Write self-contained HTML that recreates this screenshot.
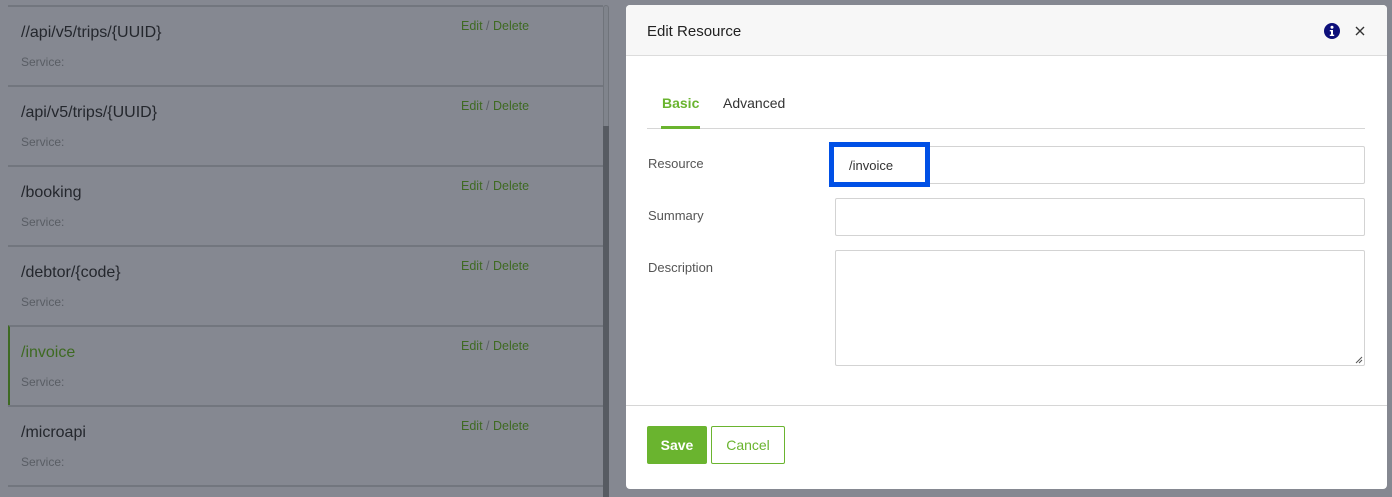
<!DOCTYPE html>
<html style="width:1392px;height:497px;overflow:hidden"><head><meta charset="utf-8"><style>
*{box-sizing:border-box;margin:0;padding:0}
body{width:1392px;height:497px;overflow:hidden;background:#858891;font-family:"Liberation Sans",sans-serif;position:relative}
.row{position:absolute;left:8px;width:595px;height:80px;border-top:2px solid #72767e}
.row .t{position:absolute;left:13px;top:17px;font-size:16px;color:#24272d}
.row .s{position:absolute;left:13px;top:48px;font-size:12px;color:#595d64}
.row .e{position:absolute;left:453px;top:12px;font-size:12.5px;color:#3e6a22}
.row .e span{color:#5a5e64}
.act{border-left:2px solid #3e6a22}
.act .t{color:#3e6a22;left:11px}
.act .s{left:11px}
.act .e{left:451px}
.track{position:absolute;left:603px;top:5px;width:6px;height:492px;border:1px solid #70747b;border-radius:3px;background:#80848c}
.thumb{position:absolute;left:603px;top:126px;width:6px;height:371px;background:#575b62}
.modal{position:absolute;left:626px;top:5px;width:761px;height:484px;background:#fff;border-radius:4px;overflow:hidden}
.hdr{height:51px;background:#f7f7f7;border-bottom:1px solid #dcdcdc;position:relative}
.hdr .ti{position:absolute;left:21px;top:18px;font-size:15px;color:#222}
.lab{position:absolute;left:22px;font-size:13px;color:#555}
.inp{position:absolute;left:209px;width:530px;border:1px solid #d3d3d3;border-radius:2px}
</style></head><body>
<div class="row" style="top:5px"><div class="t">//api/v5/trips/{UUID}</div><div class="s">Service:</div><div class="e">Edit <span>/</span> Delete</div></div>
<div class="row" style="top:85px"><div class="t">/api/v5/trips/{UUID}</div><div class="s">Service:</div><div class="e">Edit <span>/</span> Delete</div></div>
<div class="row" style="top:165px"><div class="t">/booking</div><div class="s">Service:</div><div class="e">Edit <span>/</span> Delete</div></div>
<div class="row" style="top:245px"><div class="t">/debtor/{code}</div><div class="s">Service:</div><div class="e">Edit <span>/</span> Delete</div></div>
<div class="row act" style="top:325px"><div class="t">/invoice</div><div class="s">Service:</div><div class="e">Edit <span>/</span> Delete</div></div>
<div class="row" style="top:405px"><div class="t">/microapi</div><div class="s">Service:</div><div class="e">Edit <span>/</span> Delete</div></div>
<div class="row" style="top:485px;height:12px"></div>
<div class="track"></div><div class="thumb"></div>
<div class="modal">
 <div class="hdr"><div class="ti">Edit Resource</div>
  <svg style="position:absolute;left:698px;top:18px" width="16" height="16" viewBox="0 0 16 16"><circle cx="8" cy="8" r="8" fill="#0d0f7a"/><circle cx="8" cy="4.3" r="1.5" fill="#fff"/><path d="M5.8 7h3.2v4.6h1.2v1.4H5.8v-1.4H7V8.4H5.8z" fill="#fff"/></svg>
  <svg style="position:absolute;left:729px;top:21px" width="10" height="10" viewBox="0 0 10 10"><path d="M1 1L9 9M9 1L1 9" stroke="#333" stroke-width="1.4"/></svg>
 </div>
 <div style="position:absolute;left:36px;top:90px;font-size:14px;font-weight:bold;color:#6ab42f">Basic</div>
 <div style="position:absolute;left:97px;top:90px;font-size:14px;color:#333">Advanced</div>
 <div style="position:absolute;left:21px;top:123px;width:718px;height:1px;background:#d6d6d6"></div>
 <div style="position:absolute;left:35px;top:121px;width:39px;height:3px;background:#6ab42f"></div>
 <div class="lab" style="top:151px">Resource</div>
 <div class="lab" style="top:203px">Summary</div>
 <div class="lab" style="top:255px">Description</div>
 <div class="inp" style="top:141px;height:38px"></div>
 <div style="position:absolute;left:203px;top:137px;width:101px;height:45px;border:5px solid #0050e6;background:#fff"></div>
 <div style="position:absolute;left:223px;top:153px;font-size:13px;color:#333">/invoice</div>
 <div class="inp" style="top:193px;height:38px"></div>
 <div class="inp" style="top:245px;height:116px"><svg style="position:absolute;right:1px;bottom:1px" width="8" height="8" viewBox="0 0 8 8"><path d="M1 7L7 1M4 7L7 4" stroke="#555" stroke-width="1"/></svg></div>
 <div style="position:absolute;left:0;top:400px;width:761px;height:1px;background:#d6d6d6"></div>
 <div style="position:absolute;left:21px;top:421px;width:60px;height:38px;background:#6ab42f;border-radius:2px;color:#fff;font-size:14px;font-weight:bold;text-align:center;line-height:38px">Save</div>
 <div style="position:absolute;left:85px;top:421px;width:74px;height:38px;border:1px solid #6ab42f;border-radius:2px;color:#6ab42f;font-size:14px;text-align:center;line-height:36px">Cancel</div>
</div>
</body></html>
